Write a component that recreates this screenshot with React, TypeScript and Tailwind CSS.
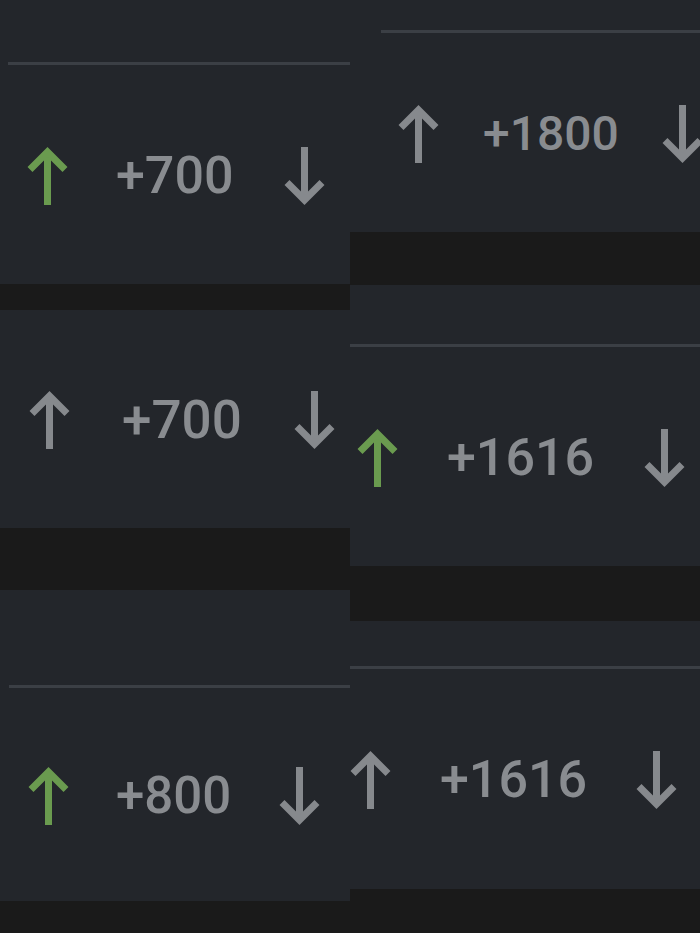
type Card = {
  id: string;
  score: string;
  upvoted: boolean;
  // card box: height + divider placement
  box: string;
  divider?: string;
  // horizontal placement of the vote row
  row: string;
  textGap: string;
  textSize: string;
  downGap: string;
};

const leftCards: Card[] = [
  {
    id: 'l1',
    score: '+700',
    upvoted: true,
    box: 'h-[284px]',
    divider: 'mt-[62px] ml-[8px]',
    row: 'pl-[27px]',
    textGap: 'ml-[48px]',
    textSize: 'text-[52px]',
    downGap: 'ml-[50px]',
  },
  {
    id: 'l2',
    score: '+700',
    upvoted: false,
    box: 'h-[218px] mt-[26px]',
    row: 'pl-[29px]',
    textGap: 'ml-[52px]',
    textSize: 'text-[53px]',
    downGap: 'ml-[52px]',
  },
  {
    id: 'l3',
    score: '+800',
    upvoted: true,
    box: 'h-[311px] mt-[62px]',
    divider: 'mt-[95px] ml-[9px]',
    row: 'pl-[28px]',
    textGap: 'ml-[47px]',
    textSize: 'text-[51px]',
    downGap: 'ml-[48px]',
  },
];

const rightCards: Card[] = [
  {
    id: 'r1',
    score: '+1800',
    upvoted: false,
    box: 'h-[232px]',
    divider: 'mt-[30px] ml-[31px]',
    row: 'pl-[48px]',
    textGap: 'ml-[44px]',
    textSize: 'text-[48px]',
    downGap: 'ml-[43px]',
  },
  {
    id: 'r2',
    score: '+1616',
    upvoted: true,
    box: 'h-[281px] mt-[53px]',
    divider: 'mt-[59px]',
    row: 'pl-[7px]',
    textGap: 'ml-[49px]',
    textSize: 'text-[52px]',
    downGap: 'ml-[50px]',
  },
  {
    id: 'r3',
    score: '+1616',
    upvoted: false,
    box: 'h-[268px] mt-[55px]',
    divider: 'mt-[45px]',
    row: 'pl-0',
    textGap: 'ml-[49px]',
    textSize: 'text-[52px]',
    downGap: 'ml-[49px]',
  },
];

function Arrow({ dir, active }: { dir: 'up' | 'down'; active?: boolean }) {
  return (
    <svg
      viewBox="0 0 41 58"
      className={[
        'h-[58px] w-[41px] shrink-0',
        dir === 'down' ? 'rotate-180' : '',
        active ? 'text-[#6a9b4f]' : 'text-[#86898d]',
      ].join(' ')}
      fill="none"
      stroke="currentColor"
      strokeWidth={7}
      aria-hidden="true"
    >
      <path d="M20.5 5V58" />
      <path d="M3 22.5L20.5 5L38 22.5" strokeLinejoin="miter" />
    </svg>
  );
}

function VoteCard({ card }: { card: Card }) {
  return (
    <div className={`flex flex-col bg-[#23262b] ${card.box}`}>
      {card.divider && <div className={`h-[3px] shrink-0 bg-[#3b3f45] ${card.divider}`} />}
      <div className={`flex flex-1 items-center pt-[2px] ${card.row}`}>
        <button type="button" aria-label="Upvote" className="flex">
          <Arrow dir="up" active={card.upvoted} />
        </button>
        <span
          className={`font-medium leading-none text-[#898c90] ${card.textSize} ${card.textGap}`}
          style={{ fontFamily: 'Roboto, "Noto Sans", sans-serif' }}
        >
          {card.score}
        </span>
        <button type="button" aria-label="Downvote" className={`flex ${card.downGap}`}>
          <Arrow dir="down" />
        </button>
      </div>
    </div>
  );
}

export default function App() {
  return (
    <div className="flex h-[933px] w-[700px] overflow-hidden bg-[#1a1a1a]">
      <div className="flex w-[350px] flex-col overflow-hidden">
        {leftCards.map((c) => (
          <VoteCard key={c.id} card={c} />
        ))}
      </div>
      <div className="flex w-[350px] flex-col overflow-hidden">
        {rightCards.map((c) => (
          <VoteCard key={c.id} card={c} />
        ))}
      </div>
    </div>
  );
}
